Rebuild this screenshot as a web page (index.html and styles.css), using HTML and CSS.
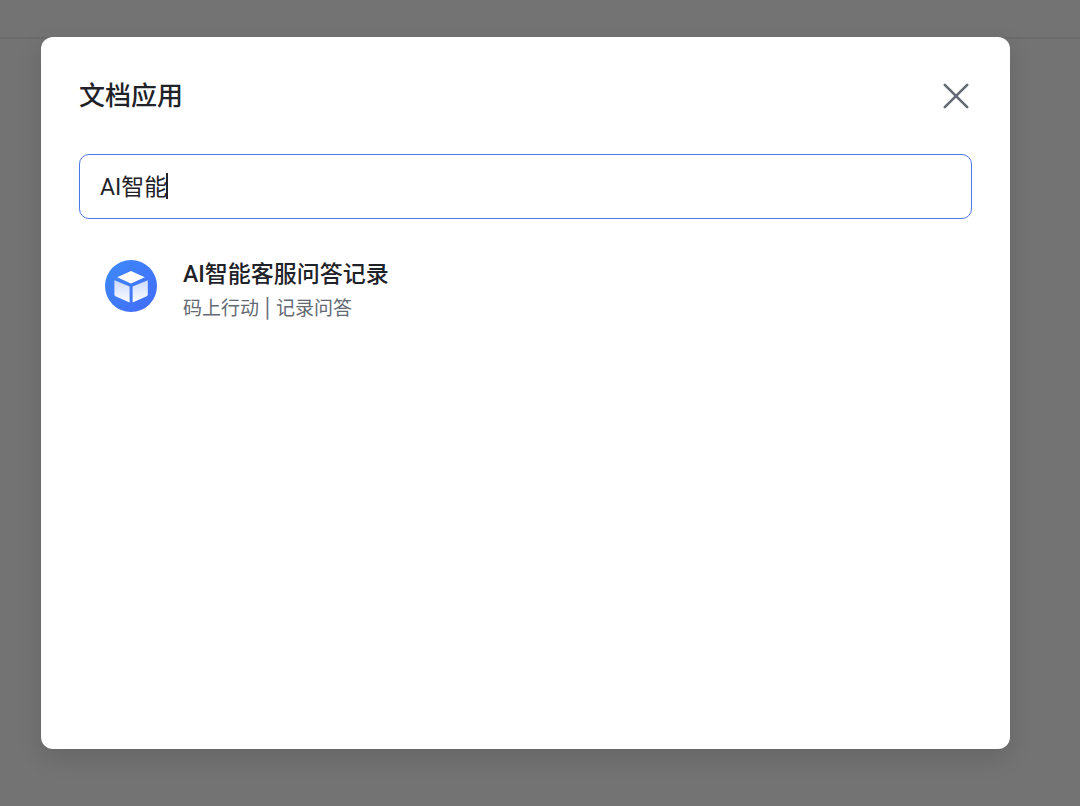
FILE: index.html
```html
<!DOCTYPE html>
<html lang="zh-CN">
<head>
    <meta charset="UTF-8">
    <meta name="viewport" content="width=device-width, initial-scale=1.0">
    <title>文档应用</title>
    <link rel="stylesheet" href="styles.css">
</head>
<body>
    <header class="topbar"></header>
    <div class="overlay">
        <div class="modal" role="dialog" aria-labelledby="modal-title">
            <div class="modal-header">
                <h1 id="modal-title">文档应用</h1>
                <button type="button" class="close-btn" aria-label="关闭">
                    <svg width="28" height="28" viewBox="0 0 28 28" fill="none" stroke="#646a73" stroke-width="2.6" stroke-linecap="round">
                        <path d="M2.8 2.8 25.2 25.2M25.2 2.8 2.8 25.2"/>
                    </svg>
                </button>
            </div>

            <div class="search-box">
                <input type="text" class="search-input" aria-label="搜索应用" value="AI智能">
                <span class="caret"></span>
            </div>

            <ul class="app-list">
                <li class="app-item">
                    <svg class="app-icon" width="52" height="52" viewBox="0 0 52 52">
                        <defs>
                            <linearGradient id="bg" x1="0" y1="0" x2="1" y2="1">
                                <stop offset="0" stop-color="#3d8bfa"/>
                                <stop offset="1" stop-color="#426af8"/>
                            </linearGradient>
                            <linearGradient id="side" x1="0" y1="0" x2="0" y2="1">
                                <stop offset="0" stop-color="#cddafd"/>
                                <stop offset="1" stop-color="#fbfcff"/>
                            </linearGradient>
                        </defs>
                        <circle cx="26" cy="26" r="26" fill="url(#bg)"/>
                        <path d="M26 11 39.8 17.2 26 23.6 12.2 17.2Z" fill="#fff"/>
                        <path d="M9.4 20.2 24.6 26.6V42.6L10.4 36.2Q9.4 35.7 9.4 34.6Z" fill="url(#side)"/>
                        <path d="M42.8 20.2 27.6 26.6V42.6L41.8 36.2Q42.8 35.7 42.8 34.6Z" fill="url(#side)"/>
                    </svg>
                    <div class="app-info">
                        <h2>AI智能客服问答记录</h2>
                        <p>码上行动 | 记录问答</p>
                    </div>
                </li>
            </ul>
        </div>
    </div>
</body>
</html>
```
FILE: styles.css
```css
* {
    box-sizing: border-box;
}

body {
    margin: 0;
    font-family: Roboto, "Noto Sans CJK SC", sans-serif;
    background-color: #737373;
    color: #1f2329;
}

h1, h2, p, ul {
    margin: 0;
    padding: 0;
}

.topbar {
    position: absolute;
    top: 0;
    left: 0;
    right: 0;
    height: 39px;
    border-bottom: 2px solid #6b6d6d;
}

.overlay {
    position: relative;
    display: flex;
    min-height: 100vh;
    padding: 37px 70px 57px 41px;
}

.modal {
    flex: 1;
    padding: 39px 38px;
    background-color: #ffffff;
    border-radius: 12px;
    box-shadow: 0 8px 24px rgba(0, 0, 0, 0.12);
}

.modal-header {
    display: flex;
    justify-content: space-between;
    align-items: center;
    height: 40px;
    margin-bottom: 38px;
}

.modal-header h1 {
    font-size: 26px;
    font-weight: 500;
    line-height: 40px;
}

.close-btn {
    display: flex;
    padding: 2px;
    border: none;
    background: none;
    cursor: pointer;
}

.search-box {
    position: relative;
}

.search-input {
    display: block;
    width: 100%;
    height: 65px;
    padding: 0 20px 4px;
    border: 1px solid #4e77e8;
    border-radius: 10px;
    outline: none;
    background-color: #ffffff;
    color: #1f2329;
    font-family: inherit;
    font-size: 23px;
}

.caret {
    position: absolute;
    top: 19px;
    left: 87px;
    width: 2px;
    height: 26px;
    background-color: #1f2329;
}

.app-list {
    margin-top: 27px;
    list-style: none;
}

.app-item {
    display: flex;
    align-items: flex-start;
    gap: 26px;
    padding: 12px 26px;
}

.app-icon {
    margin-top: 2px;
}

.app-info h2 {
    font-size: 23px;
    font-weight: 500;
    line-height: 34px;
}

.app-info p {
    color: #646a73;
    font-family: Inter, "Noto Sans CJK SC", sans-serif;
    font-size: 19px;
    line-height: 34px;
}
```
